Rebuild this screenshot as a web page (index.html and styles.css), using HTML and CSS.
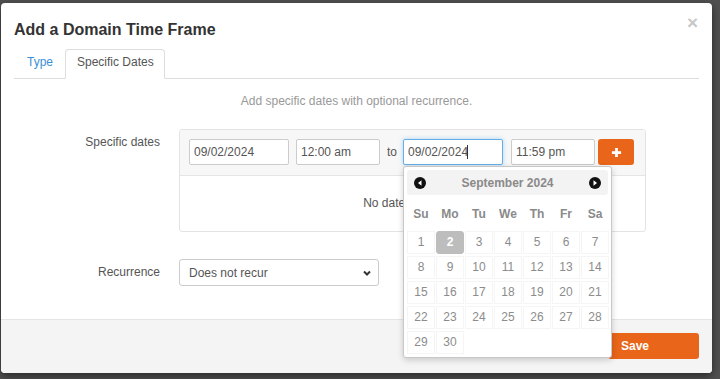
FILE: index.html
```html
<!DOCTYPE html>
<html lang="en">
<head>
    <meta charset="UTF-8">
    <meta name="viewport" content="width=device-width, initial-scale=1.0">
    <title>Add a Domain Time Frame</title>
    <link rel="stylesheet" href="styles.css">
</head>
<body>
    <div class="modal">
        <div class="modal-header">
            <h4 class="modal-title">Add a Domain Time Frame</h4>
            <button class="close" type="button">&times;</button>
        </div>

        <div class="modal-body">
            <ul class="tabs">
                <li><a href="#">Type</a></li>
                <li class="active"><a href="#">Specific Dates</a></li>
            </ul>

            <p class="help-text">Add specific dates with optional recurrence.</p>

            <div class="form-row">
                <label class="form-label">Specific dates</label>
                <div class="dates-panel">
                    <div class="dates-head">
                        <input class="field date" type="text" value="09/02/2024">
                        <input class="field time" type="text" value="12:00 am">
                        <span class="to">to</span>
                        <div class="picker-wrap">
                            <input class="field date focused" type="text" value="09/02/2024">
                            <span class="caret"></span>

                            <!-- datepicker popup -->
                            <div class="datepicker">
                                <div class="dp-header">
                                    <svg class="dp-nav" viewBox="0 0 12 12" width="12" height="12">
                                        <circle cx="6" cy="6" r="6" fill="#111"></circle>
                                        <path d="M4 6 L7.5 3.2 L7.5 8.8 Z" fill="#fff"></path>
                                    </svg>
                                    <span class="dp-title">September 2024</span>
                                    <svg class="dp-nav" viewBox="0 0 12 12" width="12" height="12">
                                        <circle cx="6" cy="6" r="6" fill="#111"></circle>
                                        <path d="M8 6 L4.5 3.2 L4.5 8.8 Z" fill="#fff"></path>
                                    </svg>
                                </div>
                                <div class="dp-weekdays">
                                    <span>Su</span><span>Mo</span><span>Tu</span><span>We</span><span>Th</span><span>Fr</span><span>Sa</span>
                                </div>
                                <div class="dp-days">
                                    <span>1</span><span class="selected">2</span><span>3</span><span>4</span><span>5</span><span>6</span><span>7</span>
                                    <span>8</span><span>9</span><span>10</span><span>11</span><span>12</span><span>13</span><span>14</span>
                                    <span>15</span><span>16</span><span>17</span><span>18</span><span>19</span><span>20</span><span>21</span>
                                    <span>22</span><span>23</span><span>24</span><span>25</span><span>26</span><span>27</span><span>28</span>
                                    <span>29</span><span>30</span>
                                </div>
                            </div>
                        </div>
                        <input class="field time time-end" type="text" value="11:59 pm">
                        <button class="add-btn" type="button">
                            <svg viewBox="0 0 12 12" width="11" height="11">
                                <path d="M6 1 V11 M1 6 H11" stroke="#fff" stroke-width="3"></path>
                            </svg>
                        </button>
                    </div>
                    <div class="dates-list">No dates specified</div>
                </div>
            </div>

            <div class="form-row recur-row">
                <label class="form-label">Recurrence</label>
                <div class="select-wrap">
                    <select class="field select">
                        <option>Does not recur</option>
                        <option>Daily</option>
                        <option>Weekly</option>
                    </select>
                    <svg class="chevron" viewBox="0 0 10 10" width="10" height="10">
                        <path d="M2 3.5 L5 6.5 L8 3.5" stroke="#333" stroke-width="2" fill="none"></path>
                    </svg>
                </div>
            </div>
        </div>

        <div class="modal-footer">
            <button class="save-btn" type="button">Save</button>
        </div>
    </div>
</body>
</html>
```

FILE: styles.css
```css
* {
    margin: 0;
    padding: 0;
    box-sizing: border-box;
}

body {
    font-family: "Liberation Sans", Arial, sans-serif;
    font-size: 12px;
    color: #555;
    background: #505050;
    height: 100vh;
    overflow: hidden;
}

.modal {
    width: 711px;
    margin: 3px 0 0 1px;
    background: #fff;
    border-radius: 4px;
    box-shadow: 0 3px 9px rgba(0, 0, 0, 0.5);
}

.modal-header {
    display: flex;
    justify-content: space-between;
    align-items: flex-start;
    padding: 15px 14px 0 13px;
}

.modal-title {
    font-size: 16px;
    font-weight: bold;
    line-height: 24px;
    color: #333;
}

.close {
    border: none;
    background: none;
    font-family: inherit;
    font-size: 19px;
    font-weight: bold;
    line-height: 20px;
    color: #c8c8c8;
    margin-top: -5px;
    cursor: pointer;
}

.modal-body {
    padding: 7px 13px 33px 13px;
}

/* tabs */
.tabs {
    display: flex;
    list-style: none;
    border-bottom: 1px solid #ddd;
}

.tabs li {
    margin-right: 2px;
    margin-bottom: -1px;
}

.tabs a {
    display: block;
    padding: 5px 9px 8px 12px;
    line-height: 15px;
    border: 1px solid transparent;
    border-radius: 4px 4px 0 0;
    color: #3b8fd6;
    text-decoration: none;
}

.tabs .active a {
    padding: 5px 10px 8px 11px;
    color: #555;
    background: #fff;
    border-color: #ddd #ddd transparent;
}

.help-text {
    margin-top: 13px;
    line-height: 18px;
    text-align: center;
    color: #999;
}

/* form rows */
.form-row {
    display: flex;
    align-items: flex-start;
    gap: 19px;
    margin-top: 19px;
}

.recur-row {
    margin-top: 27px;
}

.form-label {
    width: 146px;
    padding-top: 4px;
    line-height: 18px;
    text-align: right;
    color: #555;
}

.field {
    height: 26px;
    padding: 0 4px;
    border: 1px solid #ccc;
    border-radius: 2px;
    font-family: inherit;
    font-size: 12px;
    color: #555;
    background: #fff;
    outline: none;
}

.field.date {
    width: 100px;
}

.field.time {
    width: 84px;
    margin-left: 7px;
}

.field.focused {
    border-color: #66afe9;
    box-shadow: 0 0 4px rgba(102, 175, 233, 0.5);
}

.dates-panel {
    width: 467px;
    border: 1px solid #e3e3e3;
    border-radius: 3px;
}

.dates-head {
    display: flex;
    align-items: center;
    padding: 9px 9px 10px;
    background: #f7f7f7;
    border-bottom: 1px solid #e5e5e5;
}

.to {
    width: 9px;
    margin: 0 7px;
    color: #555;
}

.picker-wrap {
    position: relative;
}

.caret {
    position: absolute;
    left: 64px;
    top: 6px;
    width: 1px;
    height: 14px;
    background: #333;
}

.field.time-end {
    margin-left: 8px;
}

.add-btn {
    width: 36px;
    height: 26px;
    margin-left: 3px;
    border: none;
    border-radius: 3px;
    background: #e8651a;
    display: flex;
    align-items: center;
    justify-content: center;
    cursor: pointer;
}

.dates-list {
    height: 55px;
    line-height: 55px;
    text-align: center;
    color: #555;
}

/* datepicker */
.datepicker {
    position: absolute;
    top: 27px;
    left: 0;
    width: 209px;
    padding: 3px;
    background: #fff;
    border: 1px solid #c8c8c8;
    border-radius: 3px;
    box-shadow: 0 2px 6px rgba(0, 0, 0, 0.18);
    z-index: 10;
}

.dp-header {
    display: flex;
    align-items: center;
    justify-content: space-between;
    height: 25px;
    padding: 0 7px;
    background: #f3f3f3;
    border-radius: 3px;
}

.dp-title {
    font-weight: bold;
    color: #8a8a8a;
}

.dp-weekdays,
.dp-days {
    display: grid;
    grid-template-columns: repeat(7, 28px);
    column-gap: 1px;
}

.dp-weekdays {
    margin-top: 5px;
}

.dp-weekdays span {
    height: 28px;
    line-height: 28px;
    text-align: center;
    font-weight: bold;
    color: #8a8a8a;
}

.dp-days {
    margin-top: 3px;
    row-gap: 2px;
    grid-auto-rows: 23px;
}

.dp-days span {
    line-height: 21px;
    text-align: center;
    color: #8c8c8c;
    border: 1px solid #f5f5f5;
}

.dp-days .selected {
    background: #bdbdbd;
    border-color: #bdbdbd;
    border-radius: 3px;
    color: #fff;
    font-weight: bold;
}

/* select */
.select-wrap {
    position: relative;
}

.field.select {
    width: 200px;
    height: 27px;
    padding: 0 9px;
    border-radius: 3px;
    appearance: none;
    -webkit-appearance: none;
}

.chevron {
    position: absolute;
    right: 7px;
    top: 9px;
    pointer-events: none;
}

/* footer */
.modal-footer {
    display: flex;
    justify-content: flex-end;
    padding: 13px 13px 14px;
    background: #f4f4f4;
    border-top: 1px solid #e5e5e5;
    border-radius: 0 0 4px 4px;
}

.save-btn {
    width: 91px;
    height: 26px;
    padding-left: 13px;
    text-align: left;
    border: none;
    border-radius: 3px;
    background: #e8651a;
    font-family: inherit;
    font-size: 12px;
    font-weight: bold;
    color: #fff;
    cursor: pointer;
}
```
